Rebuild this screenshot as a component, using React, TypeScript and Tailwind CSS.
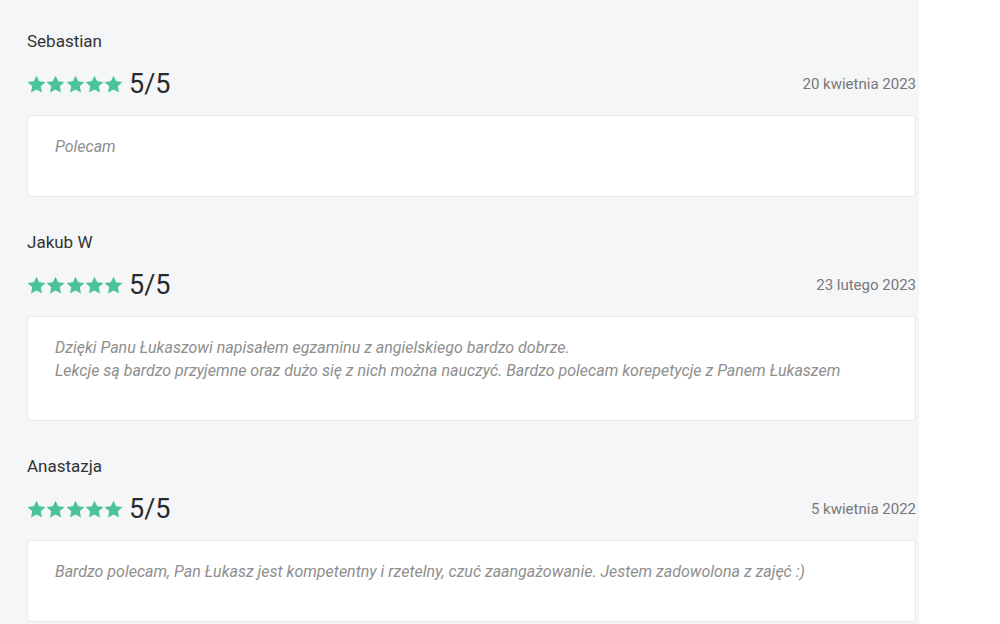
import React from "react";

type Review = {
  name: string;
  date: string;
  lines: string[];
};

const reviews: Review[] = [
  { name: "Sebastian", date: "20 kwietnia 2023", lines: ["Polecam"] },
  {
    name: "Jakub W",
    date: "23 lutego 2023",
    lines: [
      "Dzięki Panu Łukaszowi napisałem egzaminu z angielskiego bardzo dobrze.",
      "Lekcje są bardzo przyjemne oraz dużo się z nich można nauczyć. Bardzo polecam korepetycje z Panem Łukaszem",
    ],
  },
  {
    name: "Anastazja",
    date: "5 kwietnia 2022",
    lines: [
      "Bardzo polecam, Pan Łukasz jest kompetentny i rzetelny, czuć zaangażowanie. Jestem zadowolona z zajęć :)",
    ],
  },
];

const Star = () => (
  <svg width="19" height="19" viewBox="0 0 24 24" className="shrink-0">
    <path
      fill="#4ac39b"
      d="M12 0.8l3.4 7.2 7.9.9-5.9 5.4 1.6 7.8L12 18.2l-7 3.9 1.6-7.8L.7 8.9l7.9-.9z"
    />
  </svg>
);

export default function App() {
  return (
    <div className="flex min-h-[624px] bg-white font-['Roboto',sans-serif]">
      <div className="w-[919px] bg-[#f5f6f7] pl-[27px] pr-[3px] pt-[29px]">
        {reviews.map((r) => (
          <div key={r.name} className="mb-[33px]">
            <div className="text-[17px] leading-6 text-[#333]">{r.name}</div>
            <div className="mt-[13px] flex h-9 items-center justify-between">
              <div className="flex items-center">
                <div className="flex w-[96px] justify-between">
                  {[0, 1, 2, 3, 4].map((i) => (
                    <Star key={i} />
                  ))}
                </div>
                <span className="ml-[6px] text-[27px] leading-none text-[#2b2b2b]">5/5</span>
              </div>
              <span className="text-[15px] text-[#787878]">{r.date}</span>
            </div>
            <div className="mt-[13px] rounded-[3px] border border-[#e7e9eb] bg-white px-[27px] pb-[38px] pt-[19px]">
              {r.lines.map((l) => (
                <p key={l} className="text-[16px] italic leading-[23px] text-[#8e8e8e]">
                  {l}
                </p>
              ))}
            </div>
          </div>
        ))}
      </div>
    </div>
  );
}
